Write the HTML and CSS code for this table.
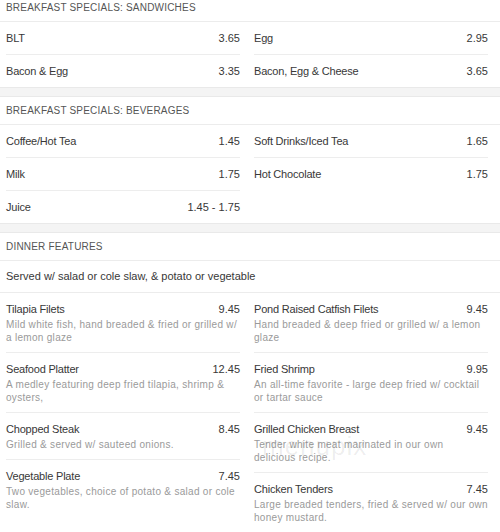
FILE: index.html
```html
<!DOCTYPE html>
<html>
<head>
<meta charset="utf-8">
<link rel="stylesheet" href="styles.css">
</head>
<body>
<div class="page">
  <section class="card first">
    <h2 class="card-title">Breakfast Specials: Sandwiches</h2>
    <div class="cols">
      <ul class="col">
        <li class="row"><span class="name">BLT</span><span>3.65</span></li>
        <li class="row"><span class="name">Bacon &amp; Egg</span><span>3.35</span></li>
      </ul>
      <ul class="col">
        <li class="row"><span class="name">Egg</span><span>2.95</span></li>
        <li class="row"><span class="name">Bacon, Egg &amp; Cheese</span><span>3.65</span></li>
      </ul>
    </div>
  </section>

  <section class="card">
    <h2 class="card-title">Breakfast Specials: Beverages</h2>
    <div class="cols">
      <ul class="col">
        <li class="row"><span class="name">Coffee/Hot Tea</span><span>1.45</span></li>
        <li class="row"><span class="name">Milk</span><span>1.75</span></li>
        <li class="row"><span class="name">Juice</span><span>1.45 - 1.75</span></li>
      </ul>
      <ul class="col">
        <li class="row"><span class="name">Soft Drinks/Iced Tea</span><span>1.65</span></li>
        <li class="row"><span class="name">Hot Chocolate</span><span>1.75</span></li>
      </ul>
    </div>
  </section>

  <section class="card">
    <h2 class="card-title">Dinner Features</h2>
    <p class="note">Served w/ salad or cole slaw, &amp; potato or vegetable</p>
    <div class="cols">
      <ul class="col">
        <li class="dish">
          <div class="dish-head"><span class="name">Tilapia Filets</span><span>9.45</span></div>
          <p class="desc">Mild white fish, hand breaded &amp; fried or grilled w/ a lemon glaze</p>
        </li>
        <li class="dish">
          <div class="dish-head"><span class="name">Seafood Platter</span><span>12.45</span></div>
          <p class="desc">A medley featuring deep fried tilapia, shrimp &amp; oysters,</p>
        </li>
        <li class="dish">
          <div class="dish-head"><span class="name">Chopped Steak</span><span>8.45</span></div>
          <p class="desc">Grilled &amp; served w/ sauteed onions.</p>
        </li>
        <li class="dish">
          <div class="dish-head"><span class="name">Vegetable Plate</span><span>7.45</span></div>
          <p class="desc">Two vegetables, choice of potato &amp; salad or cole slaw.</p>
        </li>
      </ul>
      <ul class="col">
        <li class="dish">
          <div class="dish-head"><span class="name">Pond Raised Catfish Filets</span><span>9.45</span></div>
          <p class="desc">Hand breaded &amp; deep fried or grilled w/ a lemon glaze</p>
        </li>
        <li class="dish">
          <div class="dish-head"><span class="name">Fried Shrimp</span><span>9.95</span></div>
          <p class="desc">An all-time favorite - large deep fried w/ cocktail or tartar sauce</p>
        </li>
        <li class="dish">
          <div class="dish-head"><span class="name">Grilled Chicken Breast</span><span>9.45</span></div>
          <p class="desc">Tender white meat marinated in our own<br>delicious recipe.</p>
        </li>
        <li class="dish">
          <div class="dish-head"><span class="name">Chicken Tenders</span><span>7.45</span></div>
          <p class="desc">Large breaded tenders, fried &amp; served w/ our own honey mustard.</p>
        </li>
      </ul>
    </div>
    <span class="watermark">menupix</span>
  </section>
</div>
</body>
</html>
```

FILE: styles.css
```css
* { box-sizing: border-box; }

html, body {
  margin: 0;
  padding: 0;
  background: #ffffff;
  overflow: hidden;
}

body {
  font-family: "Liberation Sans", Arial, sans-serif;
  color: #383838;
}

.page {
  background: #f4f4f4;
}

.card {
  position: relative;
  background: #ffffff;
  border-top: 1px solid #e9e9e9;
  border-bottom: 1px solid #e9e9e9;
  margin-bottom: 8px;
}

.card.first {
  margin-top: -6px;
  border-top: none;
}

.card-title {
  margin: 0;
  height: 28px;
  line-height: 27px;
  padding: 0 6px;
  font-size: 10px;
  font-weight: normal;
  letter-spacing: 0.2px;
  text-transform: uppercase;
  color: #555555;
  border-bottom: 1px solid #ececec;
}

.note {
  margin: 0;
  height: 32px;
  line-height: 31px;
  padding: 0 6px;
  font-size: 11px;
  color: #383838;
  border-bottom: 1px solid #ececec;
}

.cols {
  display: grid;
  grid-template-columns: 1fr 1fr;
  column-gap: 14px;
  padding: 0 12px 0 6px;
}

.col {
  list-style: none;
  margin: 0;
  padding: 0;
}

.row {
  display: flex;
  justify-content: space-between;
  line-height: 32px;
  font-size: 11px;
  color: #383838;
}

.row + .row {
  border-top: 1px solid #ededed;
}

.name {
  letter-spacing: -0.2px;
}

.dish {
  padding: 9px 0 8px;
}

.dish + .dish {
  border-top: 1px solid #ededed;
}

.dish-head {
  display: flex;
  justify-content: space-between;
  font-size: 11px;
  line-height: 14px;
  color: #383838;
}

.desc {
  margin: 2px 0 0;
  font-size: 10px;
  line-height: 13px;
  letter-spacing: 0.3px;
  color: #9a9a9a;
}

.watermark {
  position: absolute;
  left: 262px;
  top: 200px;
  font-size: 26px;
  line-height: 26px;
  letter-spacing: 1px;
  color: rgba(0, 0, 0, 0.07);
  pointer-events: none;
}
```
